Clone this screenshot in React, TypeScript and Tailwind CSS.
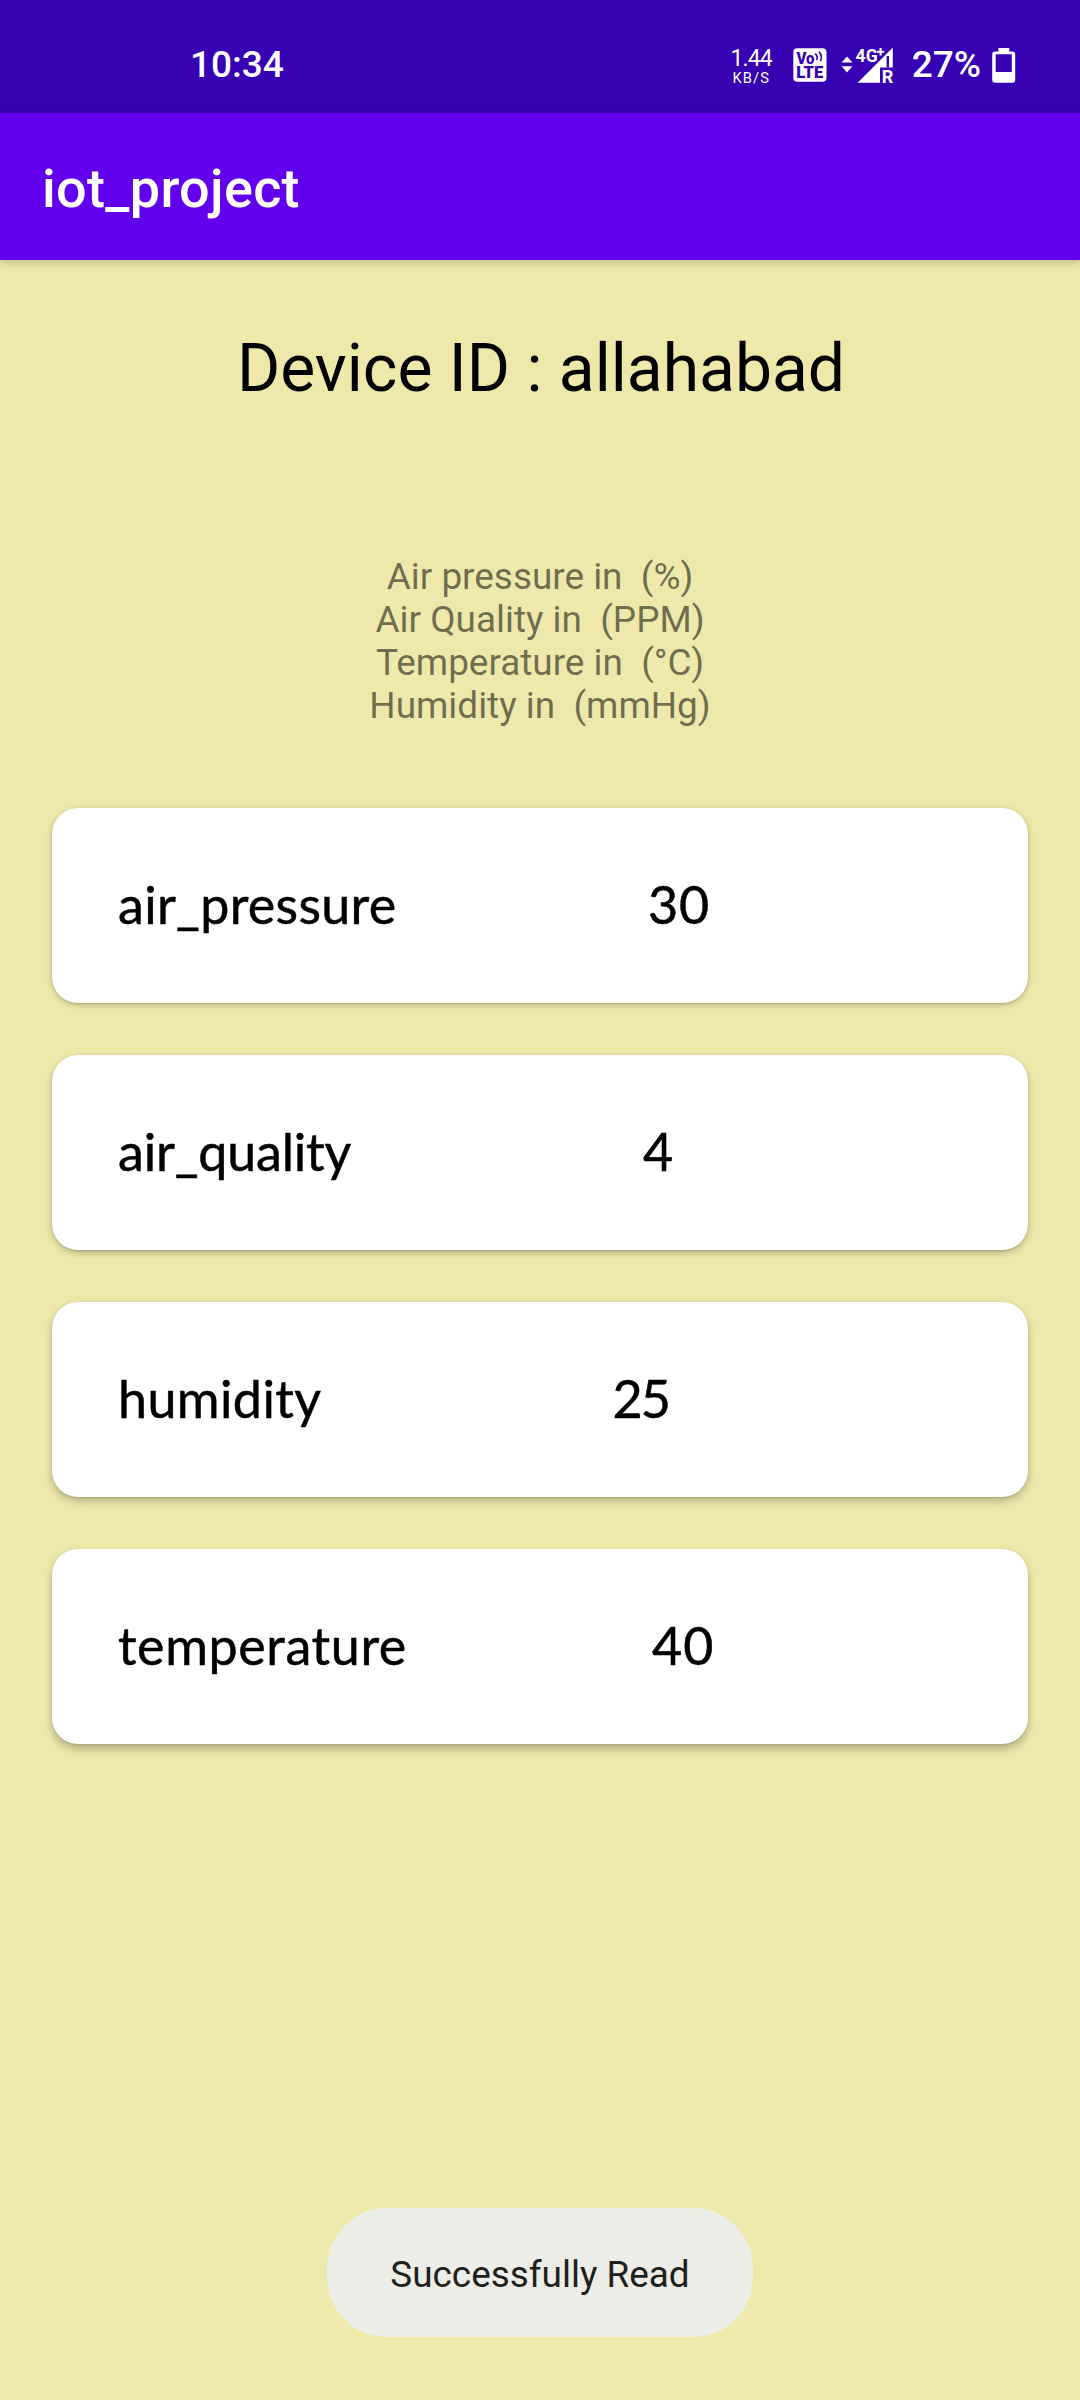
import React from 'react';

type Reading = {
  name: string;
  value: string;
  nameClass: string;
  valueClass: string;
  shadow: string;
};

const readings: Reading[] = [
  {
    name: 'air_pressure',
    value: '30',
    nameClass: 'w-[530px] tracking-[0.29px]',
    valueClass: 'tracking-[0.8px]',
    shadow: 'shadow-[0_2px_6px_rgba(0,0,0,0.22),0_1px_2px_rgba(0,0,0,0.1)]',
  },
  {
    name: 'air_quality',
    value: '4',
    nameClass: 'w-[525px] tracking-[-0.2px]',
    valueClass: 'tracking-normal',
    shadow: 'shadow-[0_3px_7px_rgba(0,0,0,0.23),0_1px_2px_rgba(0,0,0,0.1)]',
  },
  {
    name: 'humidity',
    value: '25',
    nameClass: 'w-[494.5px] tracking-[0.4px]',
    valueClass: 'tracking-[-2px]',
    shadow: 'shadow-[0_4px_8px_rgba(0,0,0,0.24),0_1px_2px_rgba(0,0,0,0.1)]',
  },
  {
    name: 'temperature',
    value: '40',
    nameClass: 'w-[534px] tracking-[0.6px]',
    valueClass: 'tracking-[1px]',
    shadow: 'shadow-[0_5px_9px_rgba(0,0,0,0.25),0_1px_2px_rgba(0,0,0,0.1)]',
  },
];

const units = [
  'Air pressure in  (%)',
  'Air Quality in  (PPM)',
  'Temperature in  (°C)',
  'Humidity in  (mmHg)',
];

function VolteIcon() {
  return (
    <svg width="34" height="34" viewBox="0 0 34 34" className="ml-[21px] mt-[48px] shrink-0">
      <rect x="0.3" y="0.3" width="33.2" height="33.4" rx="4" fill="#fff" />
      <g fill="#3700b3" fontFamily="Roboto, sans-serif" fontWeight="900">
        <text x="3.4" y="16" fontSize="16" textLength="18" lengthAdjust="spacingAndGlyphs">Vo</text>
        <text x="3.2" y="30.2" fontSize="16.5" textLength="27" lengthAdjust="spacingAndGlyphs">LTE</text>
      </g>
      <g fill="none" stroke="#3700b3" strokeWidth="1.6">
        <path d="M22.2 5.6 Q25.4 8.6 23.6 12" />
        <path d="M26 3.8 Q30 8.6 27.4 13.2" />
      </g>
    </svg>
  );
}

function SignalIcon() {
  return (
    <svg width="54" height="48" viewBox="0 -4 54 48" className="ml-[13px] mt-[42px] shrink-0">
      <g fill="#fff">
        <path d="M1.5 16.5 L7 10.4 L12.5 16.5Z" />
        <path d="M1.5 20.3 L7 26.6 L12.5 20.3Z" />
        <path d="M17.6 36.8 L52.8 1.6 V21.5 H40 V36.8Z" />
      </g>
      <path d="M46.6 10 h2.4 v11.5 h-2.4Z" fill="#3700b3" />
      <g fontFamily="Roboto, sans-serif" fontWeight="700" fill="#fff">
        <text x="15.6" y="16.2" fontSize="17.5" textLength="22" lengthAdjust="spacingAndGlyphs" stroke="#3700b3" strokeWidth="2.4" paintOrder="stroke">4G</text>
        <text x="41.8" y="36.8" fontSize="17.5" textLength="11.5" lengthAdjust="spacingAndGlyphs">R</text>
      </g>
      <path d="M40.6 1.6 V9.8 M36.8 5.7 H44.6" stroke="#3700b3" strokeWidth="4.6" />
      <path d="M40.6 2 V9.6 M37 5.7 H44.2" stroke="#fff" strokeWidth="2.1" />
    </svg>
  );
}

function BatteryIcon() {
  return (
    <svg width="24" height="36" viewBox="0 0 24 36" className="ml-[11px] mt-[48px] shrink-0">
      <path
        fill="#fff"
        fillRule="evenodd"
        d="M6.4 0 H17.3 V3.5 H20.2 Q23.2 3.5 23.2 6.5 V31.7 Q23.2 34.7 20.2 34.7 H3.2 Q0.2 34.7 0.2 31.7 V6.5 Q0.2 3.5 3.2 3.5 H6.4Z M3.7 6.2 V24 H19.8 V6.2Z"
      />
    </svg>
  );
}

function StatusBar() {
  return (
    <div className="flex h-[113px] items-start bg-[#3700b3] text-white">
      <div className="ml-[190px] mt-[43px] w-[100px] text-[37px] leading-[44px] font-medium">10:34</div>
      <div className="ml-auto flex items-start pr-[64px]">
        <div className="mt-[47px] flex w-[41px] flex-col items-center whitespace-nowrap">
          <div className="text-[23px] leading-[24px] tracking-[-0.9px]">1.44</div>
          <div className="text-[14.7px] leading-[14px] tracking-[1.1px]">KB/S</div>
        </div>
        <VolteIcon />
        <SignalIcon />
        <div className="ml-[18px] mt-[43px] text-[37px] leading-[44px] font-medium">27%</div>
        <BatteryIcon />
      </div>
    </div>
  );
}

export default function App() {
  return (
    <div className="relative h-[2400px] w-[1080px] overflow-hidden bg-[#eee8aa] font-['Roboto',sans-serif]">
      <StatusBar />
      <header className="flex h-[147px] items-center bg-[#6200ee] pt-[5px] pl-[42px] shadow-[0_2px_9px_rgba(0,0,0,0.22)]">
        <h1 className="text-[54px] leading-[60px] font-medium tracking-[0.3px] text-white">iot_project</h1>
      </header>

      <main>
        <h2 className="mt-[71px] pl-[2px] text-center text-[66px] leading-[76px] text-black">Device ID : allahabad</h2>
        <div className="mt-[148px] text-center text-[36.9px] leading-[43px] whitespace-pre text-black/[0.54]">
          {units.map((u) => (
            <div key={u}>{u}</div>
          ))}
        </div>

        <div className="mt-[81px] flex flex-col gap-[52px] px-[52px]">
          {readings.map((r) => (
            <div
              key={r.name}
              className={`flex h-[195px] items-center rounded-[26px] bg-white pb-[4px] pl-[66px] font-['Lato',sans-serif] text-[52px] leading-[62px] text-black [-webkit-text-stroke:0.5px_black] ${r.shadow}`}
            >
              <div className={r.nameClass}>{r.name}</div>
              <div className={r.valueClass}>{r.value}</div>
            </div>
          ))}
        </div>
      </main>

      <div className="absolute top-[2208px] left-[327px] flex h-[129px] w-[426px] items-center justify-center rounded-[60px] bg-[#ecede6] pt-[5px] text-[36.9px] leading-[44px] text-[#1f1f1c]">
        Successfully Read
      </div>
    </div>
  );
}
